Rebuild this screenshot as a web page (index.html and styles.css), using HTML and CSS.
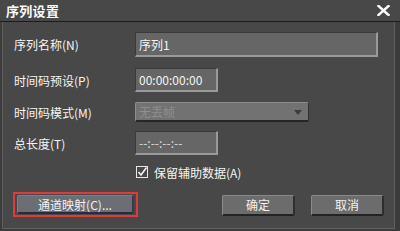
FILE: index.html
```html
<!DOCTYPE html>
<html>
<head>
<meta charset="utf-8">
<link rel="stylesheet" href="styles.css">
</head>
<body>
<div class="dialog">
  <div class="titlebar">
    <span class="title">序列设置</span>
    <svg class="close" width="13" height="11" viewBox="0 0 13 11"><path d="M1.5 1 L11.5 10 M11.5 1 L1.5 10" stroke="#fff" stroke-width="2.4" stroke-linecap="square"/></svg>
  </div>
  <div class="body">
    <div class="row r1">
      <span class="label">序列名称(N)</span>
      <div class="field wide">序列1</div>
    </div>
    <div class="row r2">
      <span class="label">时间码预设(P)</span>
      <div class="field short">00:00:00:00</div>
    </div>
    <div class="row r3">
      <span class="label">时间码模式(M)</span>
      <div class="select"><span>无丢帧</span><span class="arrow"></span></div>
    </div>
    <div class="row r4">
      <span class="label">总长度(T)</span>
      <div class="field short dim">--:--:--:--</div>
    </div>
    <div class="row r5">
      <span class="check"><svg width="12" height="12" viewBox="0 0 12 12"><rect x="0.5" y="0.5" width="11" height="11" fill="none" stroke="#e8e8e8" stroke-width="1"/><path d="M2.5 6 L5 9 L10.5 1.5" fill="none" stroke="#f4f4f4" stroke-width="1.6"/></svg></span>
      <span class="checklabel">保留辅助数据(A)</span>
    </div>
    <div class="row r6">
      <div class="hl"><button class="btn map">通道映射(C)...</button></div>
      <div class="spacer"></div>
      <button class="btn ok">确定</button>
      <button class="btn cancel">取消</button>
    </div>
  </div>
</div>
</body>
</html>
```
FILE: styles.css
```css
html, body { margin: 0; padding: 0; }
body {
  width: 400px; height: 231px; overflow: hidden;
  background: #3a3a3a;
  font-family: "Noto Sans CJK SC", "Liberation Sans", sans-serif;
  color: #f2f2f2;
}
.dialog { width: 400px; height: 231px; display: flex; flex-direction: column; background: #3c3c3c; }
.titlebar {
  height: 21px; flex: none;
  background: #484848;
  border-bottom: 1px solid #1c1c1c;
  display: flex; align-items: center; justify-content: space-between;
  padding: 0 10px 0 6px;
}
.title { font-size: 13px; font-weight: bold; color: #fafafa; line-height: 21px; letter-spacing: 0.3px; }
.close { display: block; margin-top: -1px; }
.body {
  flex: 1;
  margin: 0 5px 2px 2px;
  background: #484848;
  border-left: 1px solid #5e5e5e;
  border-right: 1px solid #5e5e5e;
  border-bottom: 1px solid #626262;
  padding: 10px 0 0 11px;
  display: flex; flex-direction: column;
}
.row { display: flex; align-items: center; }
.label { width: 121px; flex: none; font-size: 12px; color: #f4f4f4; }
.r1 { height: 25px; margin-bottom: 11px; }
.r2 { height: 24px; margin-bottom: 10px; }
.r3 { height: 20px; margin-bottom: 9px; }
.r4 { height: 24px; margin-bottom: 11px; }
.r5 { height: 12px; margin-bottom: 14px; padding-left: 122px; }
.r6 { height: 25px; padding-right: 10px; }
.field {
  box-sizing: border-box; height: 100%;
  background: #666666;
  border-top: 1px solid #3a3a3a; border-left: 1px solid #3a3a3a;
  border-right: 2px solid #9a9a9a; border-bottom: 2px solid #9a9a9a;
  font-size: 12px; color: #f4f4f4;
  padding-left: 3px; display: flex; align-items: center;
}
.wide { width: 243px; }
.short { width: 83px; }
.dim { color: #dcdcdc; }
.select {
  box-sizing: border-box; width: 174px; height: 100%;
  background: #727272;
  border-top: 1px solid #8c8c8c; border-left: 1px solid #8c8c8c;
  border-right: 1px solid #303030; border-bottom: 2px solid #262626;
  border-radius: 2px;
  font-size: 12px; color: #8e8e8e;
  padding: 0 6px 0 3px; display: flex; align-items: center; justify-content: space-between;
}
.arrow { width: 0; height: 0; border-left: 4px solid transparent; border-right: 4px solid transparent; border-top: 5px solid #3c3c3c; margin-top: 2px; }
.check { width: 12px; height: 12px; display: block; }
.check svg { display: block; }
.checklabel { font-size: 12px; margin-left: 6px; color: #f4f4f4; }
.hl { border: 2px solid #e03a3a; padding: 1px 2px 1px 2px; margin-left: -1px; height: 25px; box-sizing: border-box; display: flex; }
.btn {
  font-family: inherit; font-size: 12px; color: #f2f2f2;
  background: #6c6c6c;
  border: 1px solid #8a8a8a; border-bottom: 2px solid #232323; border-right: 2px solid #2e2e2e;
  border-radius: 2px;
  padding: 0; margin: 0;
  display: flex; align-items: center; justify-content: center;
}
.map { width: 117px; height: 19px; background: #6b6e74; border-color: #6d7fa2; border-bottom-color: #2a2a3a; border-right-color: #3a3a4a; }
.spacer { flex: 1; }
.ok, .cancel { width: 73px; height: 21px; margin-top: 1px; }
.ok { margin-right: 16px; }
```
